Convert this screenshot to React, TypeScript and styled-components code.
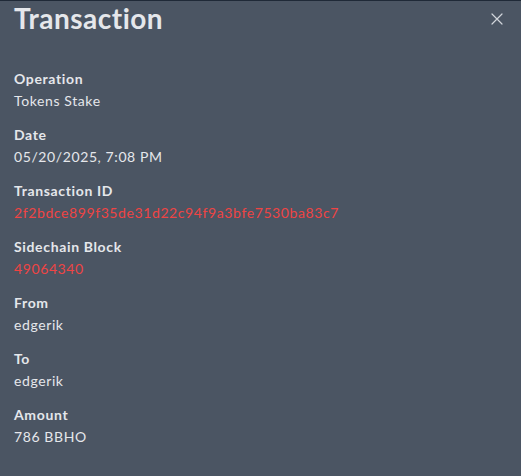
import styled, { createGlobalStyle } from "styled-components";

const GlobalStyle = createGlobalStyle`
  html, body {
    margin: 0;
    padding: 0;
    background: #4b5563;
  }
  body {
    font-family: "Lato", "Noto Sans", sans-serif;
  }
`;

const Panel = styled.section`
  box-sizing: border-box;
  width: 521px;
  height: 476px;
  background: #4b5563;
  border-top: 1px solid #1f2937;
  color: #e5e7eb;
  padding: 0 14px;
`;

const Header = styled.header`
  display: flex;
  align-items: center;
  justify-content: space-between;
  height: 35px;
`;

const Title = styled.h1`
  margin: 0;
  font-size: 28px;
  font-weight: 700;
  letter-spacing: 0.5px;
  line-height: 35px;
  color: #e5e7eb;
`;

const CloseButton = styled.button`
  display: flex;
  align-items: center;
  justify-content: center;
  width: 20px;
  height: 20px;
  padding: 0;
  border: none;
  background: transparent;
  color: #d1d5db;
  cursor: pointer;
`;

const Fields = styled.dl`
  display: flex;
  flex-direction: column;
  gap: 12px;
  margin: 32px 0 0;
`;

const Field = styled.div`
  display: flex;
  flex-direction: column;
`;

const Label = styled.dt`
  font-size: 14px;
  font-weight: 700;
  letter-spacing: 0.65px;
  line-height: 22px;
  color: #e5e7eb;
`;

const Value = styled.dd<{ $accent?: boolean }>`
  margin: 0;
  font-size: 14px;
  letter-spacing: 0.6px;
  line-height: 22px;
  color: ${(p) => (p.$accent ? "#ef4444" : "#e5e7eb")};
`;

const rows: { label: string; value: string; accent?: boolean }[] = [
  { label: "Operation", value: "Tokens Stake" },
  { label: "Date", value: "05/20/2025, 7:08 PM" },
  {
    label: "Transaction ID",
    value: "2f2bdce899f35de31d22c94f9a3bfe7530ba83c7",
    accent: true,
  },
  { label: "Sidechain Block", value: "49064340", accent: true },
  { label: "From", value: "edgerik" },
  { label: "To", value: "edgerik" },
  { label: "Amount", value: "786 BBHO" },
];

export default function App() {
  return (
    <>
      <GlobalStyle />
      <Panel>
        <Header>
          <Title>Transaction</Title>
          <CloseButton aria-label="Close">
            <svg width="12" height="12" viewBox="0 0 12 12" fill="none">
              <path
                d="M1 1L11 11M11 1L1 11"
                stroke="currentColor"
                strokeWidth="1.2"
                strokeLinecap="round"
              />
            </svg>
          </CloseButton>
        </Header>
        <Fields>
          {rows.map((r) => (
            <Field key={r.label}>
              <Label>{r.label}</Label>
              <Value $accent={r.accent}>{r.value}</Value>
            </Field>
          ))}
        </Fields>
      </Panel>
    </>
  );
}
